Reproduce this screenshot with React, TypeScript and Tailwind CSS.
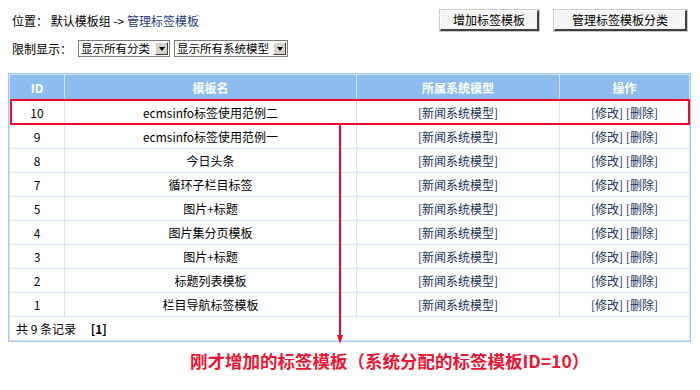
import React from 'react'

const rows = [
  { id: 10, name: 'ecmsinfo标签使用范例二' },
  { id: 9, name: 'ecmsinfo标签使用范例一' },
  { id: 8, name: '今日头条' },
  { id: 7, name: '循环子栏目标签' },
  { id: 5, name: '图片+标题' },
  { id: 4, name: '图片集分页模板' },
  { id: 3, name: '图片+标题' },
  { id: 2, name: '标题列表模板' },
  { id: 1, name: '栏目导航标签模板' },
]

function FakeSelect({ label, width }: { label: string; width: string }) {
  return (
    <div className={`flex h-[17px] items-center justify-between border border-[#7a7a7a] bg-white ${width}`}>
      <span className="whitespace-nowrap pl-[2px] text-[11.5px] leading-none">{label}</span>
      <span className="mr-[1px] flex h-[13px] w-[13px] shrink-0 items-center justify-center border border-t-white border-l-white border-r-[#404040] border-b-[#404040] bg-[#d4d0c8]">
        <span className="h-0 w-0 border-x-[3.5px] border-t-[4px] border-x-transparent border-t-black" />
      </span>
    </div>
  )
}

function Btn({ children, width }: { children: React.ReactNode; width: string }) {
  return (
    <button className={`h-[21px] ${width} border border-[#fff] border-r-2 border-b-2 border-r-[#404040] border-b-[#404040] bg-[#f4f4f2] text-[12px] leading-none text-black outline outline-1 outline-[#c9c9c9]`}>
      {children}
    </button>
  )
}

export default function App() {
  return (
    <div
      className="relative h-[390px] w-[700px] bg-white text-[12px] text-black"
      style={{ fontFamily: '"Noto Sans CJK SC", "Liberation Sans", sans-serif' }}
    >
      <div className="flex items-center justify-between pl-[12px] pr-[13px] pt-[10px]">
        <div className="leading-none">
          位置： 默认模板组 -&gt; <span className="text-[#1d3c78]">管理标签模板</span>
        </div>
        <div className="flex gap-[15px]">
          <Btn width="w-[99px]">增加标签模板</Btn>
          <Btn width="w-[133px]">管理标签模板分类</Btn>
        </div>
      </div>

      <div className="mt-[9px] flex items-center gap-[4px] pl-[12px]">
        <span className="mr-[2px] leading-none">限制显示：</span>
        <FakeSelect label="显示所有分类" width="w-[92px]" />
        <FakeSelect label="显示所有系统模型" width="w-[114px]" />
      </div>

      <div className="ml-[8px] mt-[16px] w-[683px] border border-[#a3c8ef]">
        <table className="w-full border-separate border-spacing-[1px] bg-[#d3e4f7]">
          <thead>
            <tr className="h-[25px] bg-[#8dbdee] font-bold text-white">
              <th className="w-[54px]">ID</th>
              <th className="w-[291px]">模板名</th>
              <th className="w-[202px]">所属系统模型</th>
              <th>操作</th>
            </tr>
          </thead>
          <tbody>
            {rows.map((r) => (
              <tr key={r.id} className="h-[23px] bg-white text-center">
                <td>{r.id}</td>
                <td>{r.name}</td>
                <td className="text-[#1c2f5e]">[新闻系统模型]</td>
                <td className="text-[#1c2f5e]">[修改] [删除]</td>
              </tr>
            ))}
            <tr className="h-[23px] bg-white">
              <td colSpan={4} className="pl-[6px]">
                共 9 条记录　 <b>[1]</b>
              </td>
            </tr>
          </tbody>
        </table>
      </div>

      <div className="mt-[8px] pl-[190px] text-[17.5px] font-bold leading-[22px] text-[#ec1533]">
        刚才增加的标签模板（系统分配的标签模板ID=10）
      </div>

      {/* highlight box around the new row */}
      <div className="absolute left-[10px] top-[99px] h-[26px] w-[680px] border-2 border-[#ee0a2c]" />
      {/* arrow down to the note */}
      <div className="absolute left-[340px] top-[124px] flex flex-col items-center" style={{ transform: 'translateX(-50%)' }}>
        <div className="h-[211px] w-[1.5px] bg-[#ee0a2c]" />
        <div className="h-0 w-0 border-x-[3px] border-t-[9px] border-x-transparent border-t-[#ee0a2c]" />
      </div>
    </div>
  )
}
